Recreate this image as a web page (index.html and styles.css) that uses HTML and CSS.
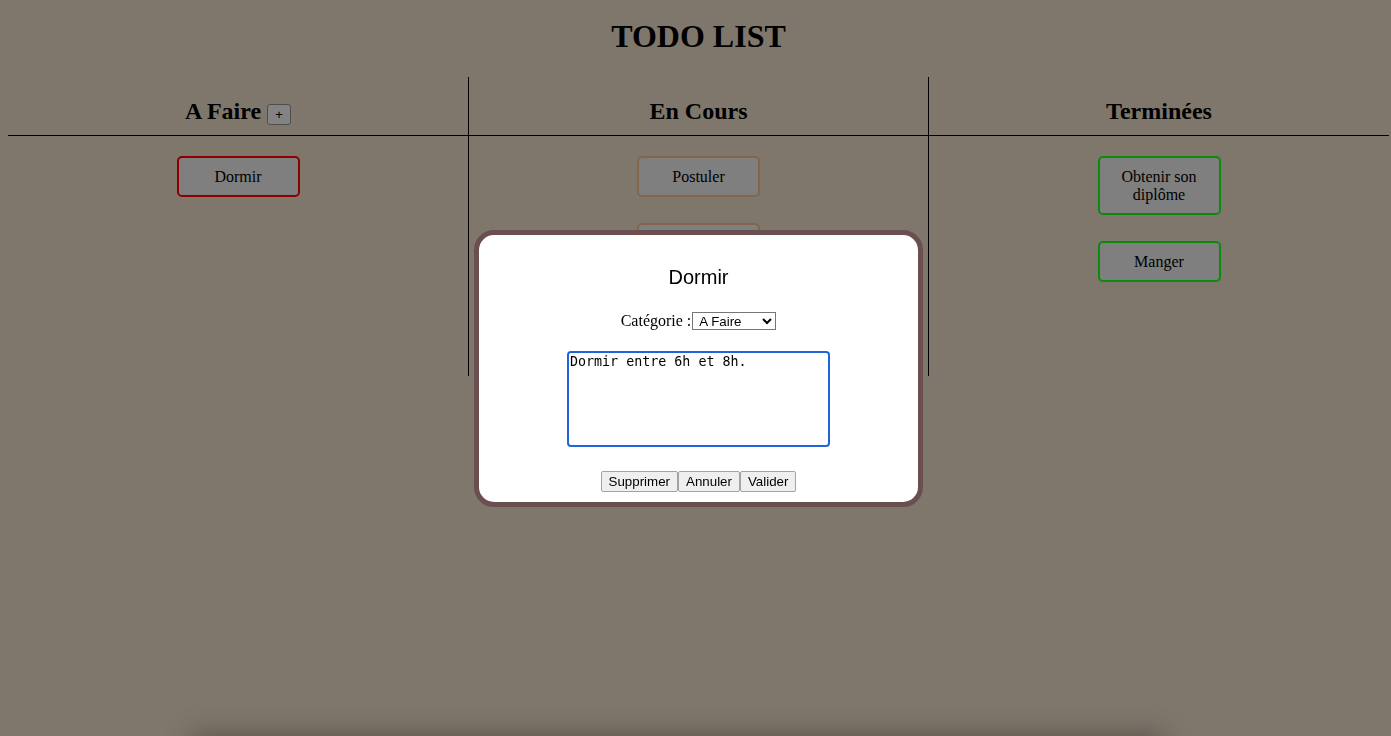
FILE: index.html
```html
<!DOCTYPE html>
<html lang="fr">
<head>
<meta charset="utf-8">
<title>TODO LIST</title>
<link rel="stylesheet" href="styles.css">
</head>
<body>
<div class="page">
  <h1 class="title">TODO LIST</h1>
  <div class="board">
    <section class="column">
      <div class="column-head"><h2>A Faire <button class="add-btn">+</button></h2></div>
      <div class="cards">
        <div class="card card-todo">Dormir</div>
      </div>
    </section>
    <section class="column column-divided">
      <div class="column-head"><h2>En Cours</h2></div>
      <div class="cards">
        <div class="card card-doing">Postuler</div>
        <div class="card card-doing">Réviser</div>
      </div>
    </section>
    <section class="column column-divided">
      <div class="column-head"><h2>Terminées</h2></div>
      <div class="cards">
        <div class="card card-done">Obtenir son diplôme</div>
        <div class="card card-done">Manger</div>
      </div>
    </section>
  </div>
</div>

<div class="overlay">
  <div class="modal">
    <h3 class="modal-title">Dormir</h3>
    <div class="category-row"><span class="category-label">Catégorie :</span><select class="category-select"><option>A Faire</option><option>En Cours</option><option>Terminées</option></select></div>
    <textarea class="description">Dormir entre 6h et 8h.</textarea>
    <div class="actions"><button class="action-btn">Supprimer</button><button class="action-btn">Annuler</button><button class="action-btn">Valider</button></div>
  </div>
</div>
<div class="bottom-shadow"></div>
</body>
</html>
```

FILE: styles.css
```css
html, body {
  margin: 0;
  padding: 0;
}

body {
  background: #7f776c;
  font-family: "Liberation Serif", "Times New Roman", serif;
  font-size: 16px;
  color: #000;
  overflow: hidden;
  height: 736px;
}

.page {
  width: 1381px;
  margin-left: 8px;
}

.title {
  margin: 18px 0 22px;
  font-size: 32px;
  line-height: 37px;
  font-weight: bold;
  text-align: center;
}

.board {
  display: grid;
  grid-template-columns: 460px 460px 461px;
}

.column {
  height: 299px;
  box-sizing: border-box;
}

.column-divided {
  border-left: 1px solid #000;
}

.column-head {
  box-sizing: border-box;
  height: 59px;
  padding-top: 20px;
  border-bottom: 1px solid #000;
}

.column-head h2 {
  margin: 0;
  font-size: 24px;
  line-height: 28px;
  font-weight: bold;
  text-align: center;
}

.add-btn {
  box-sizing: border-box;
  width: 24px;
  height: 21px;
  padding: 0;
  font-family: "Liberation Sans", Arial, sans-serif;
  font-size: 13px;
  color: #000;
  background: #838383;
  border: 1px solid #4d4d4d;
  border-radius: 3px;
  vertical-align: baseline;
}

.cards {
  padding-top: 20px;
}

.card {
  width: 101px;
  margin: 0 auto 26px;
  padding: 10px 9px 9px;
  line-height: 18px;
  text-align: center;
  background: #7f7f7f;
  border: 2px solid #000;
  border-radius: 5px;
}

.card-todo {
  border-color: #8c0000;
}

.card-doing {
  border-color: #856547;
}

.card-done {
  border-color: #0a8c0a;
}

.overlay {
  position: fixed;
  top: 0;
  left: 8px;
  width: 1381px;
  height: 736px;
  display: flex;
  align-items: center;
  justify-content: center;
}

.modal {
  box-sizing: border-box;
  width: 449px;
  padding: 0 0 10px;
  background: #fff;
  border: 5px solid #6b4f50;
  border-radius: 20px;
  text-align: center;
}

.modal-title {
  margin: 31px 0 0;
  font-family: "Liberation Sans", Arial, sans-serif;
  font-size: 20px;
  line-height: 23px;
  font-weight: normal;
}

.category-row {
  display: flex;
  justify-content: center;
  align-items: baseline;
  height: 19px;
  margin-top: 23px;
}

.category-select {
  box-sizing: border-box;
  width: 84px;
  height: 18px;
  margin: 0 0 0 1px;
  padding: 0 0 0 2px;
  font-family: "Liberation Sans", Arial, sans-serif;
  font-size: 13.33px;
  background: #fff;
  color: #000;
  border: 1px solid #767676;
  border-radius: 0;
}

.description {
  display: block;
  box-sizing: border-box;
  width: 263px;
  height: 96px;
  margin: 20px auto 0;
  padding: 1px;
  font-family: "DejaVu Sans Mono", "Liberation Mono", monospace;
  font-size: 13.33px;
  color: #000;
  background: #fff;
  border: 2px solid #1f64d8;
  border-radius: 4px;
  resize: none;
  outline: none;
}

.actions {
  display: flex;
  justify-content: center;
  margin-top: 24px;
}

.action-btn {
  box-sizing: border-box;
  height: 21px;
  margin: 0;
  padding: 1px 7px;
  font-family: "Liberation Sans", Arial, sans-serif;
  font-size: 13.33px;
  color: #000;
  background: #efefef;
  border: 1px solid #a3a3a3;
  border-radius: 2px;
}

.bottom-shadow {
  position: fixed;
  top: 738px;
  left: 195px;
  width: 965px;
  height: 60px;
  box-shadow: 0 0 26px 4px rgba(40, 30, 20, 0.38);
}
```
